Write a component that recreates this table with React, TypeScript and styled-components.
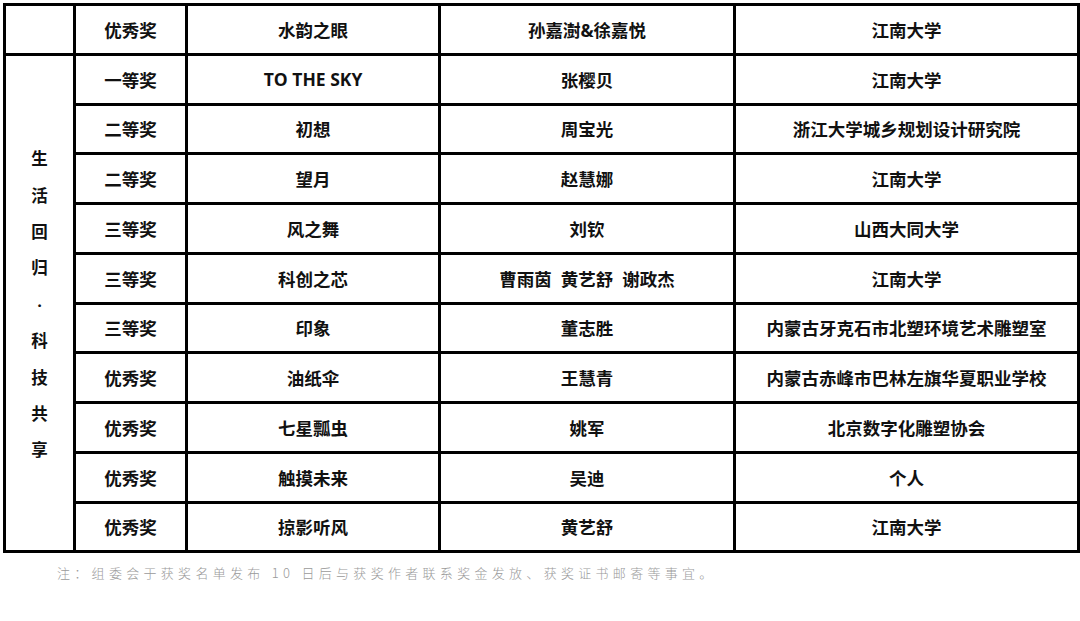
import React from "react";
import styled, { createGlobalStyle } from "styled-components";

const Global = createGlobalStyle`
  html, body { margin: 0; padding: 0; background: #fff; }
  body { font-family: "Open Sans", "Noto Sans CJK SC", sans-serif; }
`;

const Page = styled.div`
  width: 1080px;
  height: 621px;
  padding: 3px 0 0 3px;
  box-sizing: border-box;
  background: #fff;
`;

const Table = styled.table`
  border-collapse: collapse;
  table-layout: fixed;
  width: 1074px;
  border: 3px solid #000;
`;

const Col = styled.col<{ $w: number }>`
  width: ${(p) => p.$w}px;
`;

const Cell = styled.td`
  border: 3px solid #000;
  height: 46.75px;
  padding: 0;
  text-align: center;
  vertical-align: middle;
  font-family: "Open Sans", "Noto Sans CJK SC", sans-serif;
  font-weight: 700;
  font-size: 17.5px;
  color: #111;
  white-space: nowrap;
`;

const SideCell = styled(Cell)`
  font-size: 16.5px;
`;

const VerticalText = styled.div`
  display: flex;
  flex-direction: column;
  align-items: center;
  padding-top: 4px;
`;

const VChar = styled.span`
  display: block;
  line-height: 36.4px;
  height: 36.4px;
`;

const Note = styled.p`
  margin: 11px 0 0 54px;
  font-family: "Noto Sans CJK SC", sans-serif;
  font-weight: 300;
  font-size: 13px;
  line-height: 18px;
  letter-spacing: 4.3px;
  color: #9a9a9a;
`;

type Row = [string, string, string, string];

const first: Row = ["优秀奖", "水韵之眼", "孙嘉澍&徐嘉悦", "江南大学"];

const rows: Row[] = [
  ["一等奖", "TO THE SKY", "张樱贝", "江南大学"],
  ["二等奖", "初想", "周宝光", "浙江大学城乡规划设计研究院"],
  ["二等奖", "望月", "赵慧娜", "江南大学"],
  ["三等奖", "风之舞", "刘钦", "山西大同大学"],
  ["三等奖", "科创之芯", "曹雨茵\u00a0\u00a0黄艺舒\u00a0\u00a0谢政杰", "江南大学"],
  ["三等奖", "印象", "董志胜", "内蒙古牙克石市北塑环境艺术雕塑室"],
  ["优秀奖", "油纸伞", "王慧青", "内蒙古赤峰市巴林左旗华夏职业学校"],
  ["优秀奖", "七星瓢虫", "姚军", "北京数字化雕塑协会"],
  ["优秀奖", "触摸未来", "吴迪", "个人"],
  ["优秀奖", "掠影听风", "黄艺舒", "江南大学"],
];

const colWidths = [70, 112, 253, 295, 344];
const sideChars = ["生", "活", "回", "归", "·", "科", "技", "共", "享"];

export default function App() {
  return (
    <Page>
      <Global />
      <Table>
        <colgroup>
          {colWidths.map((w, i) => (
            <Col key={i} $w={w} />
          ))}
        </colgroup>
        <tbody>
          <tr>
            <Cell />
            {first.map((t, i) => (
              <Cell key={i}>{t}</Cell>
            ))}
          </tr>
          {rows.map((r, ri) => (
            <tr key={ri}>
              {ri === 0 && (
                <SideCell rowSpan={rows.length}>
                  <VerticalText>
                    {sideChars.map((c, i) => (
                      <VChar key={i}>{c}</VChar>
                    ))}
                  </VerticalText>
                </SideCell>
              )}
              {r.map((t, i) => (
                <Cell key={i}>{t}</Cell>
              ))}
            </tr>
          ))}
        </tbody>
      </Table>
      <Note>注：组委会于获奖名单发布 10 日后与获奖作者联系奖金发放、获奖证书邮寄等事宜。</Note>
    </Page>
  );
}
